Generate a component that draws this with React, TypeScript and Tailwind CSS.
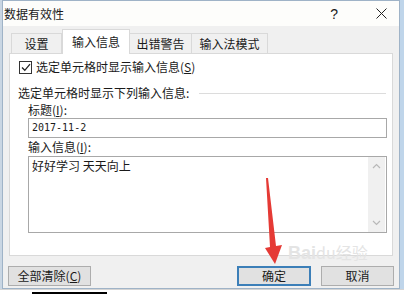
import React from 'react';

const font = { fontFamily: '"Noto Sans CJK SC", "Noto Sans", sans-serif' };

const tabs = [
  { label: '设置', w: 'w-[51px]' },
  { label: '输入信息', w: 'w-[68px]', active: true },
  { label: '出错警告', w: 'w-[63px]' },
  { label: '输入法模式', w: 'w-[77px]' },
];

const Chevron = ({ up }: { up?: boolean }) => (
  <svg width="9" height="6" viewBox="0 0 9 6" className="text-[#b8b8b8]">
    <polyline
      points={up ? '1,5 4.5,1.5 8,5' : '1,1 4.5,4.5 8,1'}
      fill="none"
      stroke="currentColor"
      strokeWidth="1.2"
    />
  </svg>
);

const App = () => {
  return (
    <div className="relative w-[404px] h-[296px] overflow-hidden bg-white text-[12px] text-[#1a1a1a]" style={font}>
      <div className="flex h-[289px]">
        <div className="w-[2px] bg-[#c9d6e3]" />
        <div className="w-[398px] h-[289px] border border-[#9fb3c7] bg-[#f0f0f0] flex flex-col">
          {/* title bar */}
          <div className="h-[25px] bg-[#fdfdfb] flex items-center pl-[1px] pr-[12px]">
            <span className="leading-none">数据有效性</span>
            <span className="ml-auto mr-[38px] text-[14px] leading-none" style={{ fontFamily: '"Liberation Sans", sans-serif' }}>?</span>
            <svg width="11" height="11" viewBox="0 0 11 11">
              <line x1="0.5" y1="0.5" x2="10.5" y2="10.5" stroke="#222" strokeWidth="1" />
              <line x1="10.5" y1="0.5" x2="0.5" y2="10.5" stroke="#222" strokeWidth="1" />
            </svg>
          </div>

          {/* tabs */}
          <div className="flex items-end h-[27px] pl-[8px] relative z-10">
            {tabs.map((t) =>
              t.active ? (
                <div
                  key={t.label}
                  className={`${t.w} h-[25px] -mb-px bg-white border border-b-0 border-[#d9d9d9] flex items-center justify-center leading-none`}
                >
                  {t.label}
                </div>
              ) : (
                <div
                  key={t.label}
                  className={`${t.w} h-[20px] bg-[#f0f0f0] border border-b-0 border-[#d9d9d9] -ml-px first:ml-0 flex items-center justify-center leading-none pt-[1px]`}
                >
                  {t.label}
                </div>
              )
            )}
          </div>

          {/* panel */}
          <div className="ml-[6px] w-[384px] h-[203px] bg-white border border-[#d9d9d9] flex flex-col pl-[8px] pt-[6px]">
            <label className="flex items-center h-[14px] ml-[1px]">
              <span className="w-[13px] h-[13px] border border-[#333] flex items-center justify-center">
                <svg width="10" height="9" viewBox="0 0 10 9">
                  <polyline points="1,4.5 3.8,7.3 9,1.2" fill="none" stroke="#222" strokeWidth="1.3" />
                </svg>
              </span>
              <span className="ml-[4px] leading-none">
                选定单元格时显示输入信息(<u>S</u>)
              </span>
            </label>

            <div className="flex items-center mt-[12px] h-[14px] pr-[6px]">
              <span className="leading-none">选定单元格时显示下列输入信息:</span>
              <div className="flex-1 h-px bg-[#dcdcdc] ml-[10px]" />
            </div>

            <div className="ml-[10px] mt-[3px] pr-[5px] flex flex-col">
              <span className="leading-none h-[14px] flex items-center">
                标题(<u>I</u>):
              </span>
              <div className="mt-[1px] h-[20px] border border-[#a8a8a8] flex items-center pl-[3px]">
                <span className="text-[10px] leading-none" style={{ fontFamily: '"DejaVu Sans Mono", monospace' }}>
                  2017-11-2
                </span>
              </div>
              <span className="leading-none h-[14px] mt-[2px] flex items-center">
                输入信息(<u>I</u>):
              </span>
              <div className="mt-[2px] h-[77px] border border-[#a8a8a8] flex">
                <div className="flex-1 pl-[3px] pt-[3px] leading-none">好好学习 天天向上</div>
                <div className="w-[17px] bg-[#f0f0f0] flex flex-col items-center justify-between py-[6px] mr-[1px]">
                  <Chevron up />
                  <Chevron />
                </div>
              </div>
            </div>
          </div>

          {/* buttons */}
          <div className="flex items-center mt-[10px] pl-[5px] pr-[5px]">
            <button className="w-[83px] h-[20px] bg-[#e1e1e1] border border-[#adadad] leading-none">
              全部清除(<u>C</u>)
            </button>
            <button className="ml-auto w-[74px] h-[20px] bg-[#e1e1e1] border-2 border-[#3c7fb8] leading-none">
              确定
            </button>
            <button className="ml-[10px] w-[73px] h-[20px] bg-[#e1e1e1] border border-[#adadad] leading-none">
              取消
            </button>
          </div>
        </div>
        <div className="flex-1 bg-[#bfd5ea]" />
      </div>

      {/* spreadsheet strip below the dialog */}
      <div className="h-[7px] bg-white border-t border-[#d4d4d4] flex">
        <div className="ml-[32px] w-[75px] h-[2px] mt-[2px] bg-black" />
      </div>

      {/* watermark */}
      <div className="absolute left-[288px] top-[244px] text-[#e4e4e4] leading-none select-none">
        <span className="text-[18px] font-bold" style={{ fontFamily: '"Liberation Sans", sans-serif' }}>Bai</span>
        <span className="text-[16px]">du经验</span>
      </div>

      {/* red arrow annotation */}
      <svg className="absolute left-0 top-0 pointer-events-none" width="404" height="296">
        <polygon
          points="266,178 268,178 276,246 282,245 275,264 265,248 270,247"
          fill="#e53a35"
        />
      </svg>
    </div>
  );
};

export default App;
